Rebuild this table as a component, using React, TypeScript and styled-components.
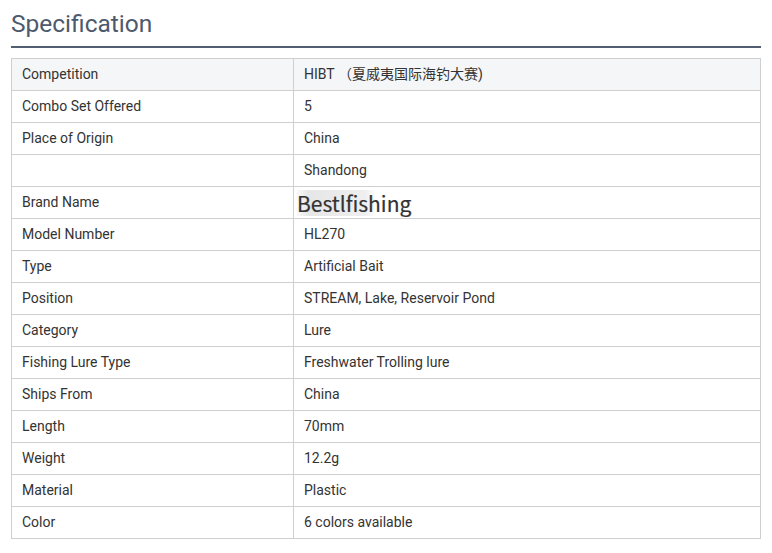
import React from "react";
import styled, { createGlobalStyle } from "styled-components";

const Global = createGlobalStyle`
  html, body { margin: 0; padding: 0; background: #fff; }
  body { font-family: Roboto, "Noto Sans CJK SC", sans-serif; }
`;

const Page = styled.div`
  padding: 5px 11px 0 11px;
  width: 750px;
`;

const Title = styled.h2`
  margin: 0;
  font-family: Roboto, sans-serif;
  font-weight: 400;
  font-size: 24.5px;
  line-height: 37px;
  color: #4d5a6e;
  padding-bottom: 4px;
  border-bottom: 2px solid #525f73;
`;

const Table = styled.table`
  margin-top: 10px;
  width: 750px;
  border-collapse: collapse;
  table-layout: fixed;
  font-family: Roboto, "Noto Sans CJK SC", sans-serif;
  font-size: 14px;
  color: #333;
`;

const Row = styled.tr<{ $head?: boolean }>`
  background: ${(p) => (p.$head ? "#f5f6f8" : "#fff")};
`;

const Cell = styled.td`
  border: 1px solid #cfcfcf;
  padding: 0 10px 1px 10px;
  height: 30px;
  line-height: 18px;
  vertical-align: middle;
  white-space: nowrap;
`;

const Brand = styled.span`
  display: inline-block;
  vertical-align: middle;
  margin-left: -7px;
  margin-top: 1px;
  font-family: "Noto Sans CJK SC", "Open Sans", sans-serif;
  font-size: 21px;
  line-height: 26px;
  color: #333;
  -webkit-text-stroke: 0.2px #333;
  background: linear-gradient(90deg, rgba(225,225,225,0.2) 0%, rgba(228,228,228,0.9) 10%, rgba(232,232,232,0.7) 60%, rgba(255,255,255,0) 70%);
`;

const rows: [string, React.ReactNode][] = [
  ["Competition", "HIBT （夏威夷国际海钓大赛)"],
  ["Combo Set Offered", "5"],
  ["Place of Origin", "China"],
  ["", "Shandong"],
  ["Brand Name", <Brand>Bestlfishing</Brand>],
  ["Model Number", "HL270"],
  ["Type", "Artificial Bait"],
  ["Position", "STREAM, Lake, Reservoir Pond"],
  ["Category", "Lure"],
  ["Fishing Lure Type", "Freshwater Trolling lure"],
  ["Ships From", "China"],
  ["Length", "70mm"],
  ["Weight", "12.2g"],
  ["Material", "Plastic"],
  ["Color", "6 colors available"],
];

export default function App() {
  return (
    <>
      <Global />
      <Page>
        <Title>Specification</Title>
        <Table>
          <colgroup>
            <col style={{ width: 282 }} />
            <col />
          </colgroup>
          <tbody>
            {rows.map(([k, v], i) => (
              <Row key={i} $head={i === 0}>
                <Cell>{k}</Cell>
                <Cell>{v}</Cell>
              </Row>
            ))}
          </tbody>
        </Table>
      </Page>
    </>
  );
}
